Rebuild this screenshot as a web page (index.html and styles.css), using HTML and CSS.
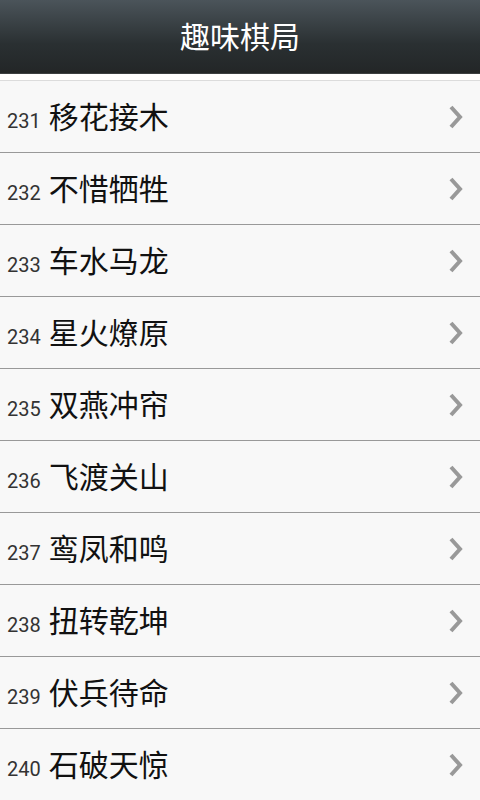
FILE: index.html
```html
<!DOCTYPE html>
<html lang="zh-CN">
  <head>
    <meta charset="UTF-8" />
    <meta name="viewport" content="width=device-width, initial-scale=1.0" />
    <title>趣味棋局</title>
    <link rel="stylesheet" href="styles.css">
  </head>
  <body>
    <div class="header">趣味棋局</div>
    <div class="gap"></div>
    <div class="list">
      <div class="item"><span class="num">231</span><span class="name">移花接木</span><svg class="arrow" viewBox="0 0 20 26"><path d="M5 3 L14 13 L5 23" /></svg></div>
      <div class="item"><span class="num">232</span><span class="name">不惜牺牲</span><svg class="arrow" viewBox="0 0 20 26"><path d="M5 3 L14 13 L5 23" /></svg></div>
      <div class="item"><span class="num">233</span><span class="name">车水马龙</span><svg class="arrow" viewBox="0 0 20 26"><path d="M5 3 L14 13 L5 23" /></svg></div>
      <div class="item"><span class="num">234</span><span class="name">星火燎原</span><svg class="arrow" viewBox="0 0 20 26"><path d="M5 3 L14 13 L5 23" /></svg></div>
      <div class="item"><span class="num">235</span><span class="name">双燕冲帘</span><svg class="arrow" viewBox="0 0 20 26"><path d="M5 3 L14 13 L5 23" /></svg></div>
      <div class="item"><span class="num">236</span><span class="name">飞渡关山</span><svg class="arrow" viewBox="0 0 20 26"><path d="M5 3 L14 13 L5 23" /></svg></div>
      <div class="item"><span class="num">237</span><span class="name">鸾凤和鸣</span><svg class="arrow" viewBox="0 0 20 26"><path d="M5 3 L14 13 L5 23" /></svg></div>
      <div class="item"><span class="num">238</span><span class="name">扭转乾坤</span><svg class="arrow" viewBox="0 0 20 26"><path d="M5 3 L14 13 L5 23" /></svg></div>
      <div class="item"><span class="num">239</span><span class="name">伏兵待命</span><svg class="arrow" viewBox="0 0 20 26"><path d="M5 3 L14 13 L5 23" /></svg></div>
      <div class="item"><span class="num">240</span><span class="name">石破天惊</span><svg class="arrow" viewBox="0 0 20 26"><path d="M5 3 L14 13 L5 23" /></svg></div>
    </div>
  </body>
</html>
```

FILE: styles.css
```css
body {
  margin: 0;
  background-color: #f8f8f8;
  font-family: Roboto, "Noto Sans CJK SC", sans-serif;
  overflow: hidden;
}
.header {
  height: 73px;
  background: linear-gradient(#4b545a, #2a3032 60%, #232627);
  border-bottom: 1px solid #3c3f40;
  color: #fff;
  font-size: 30px;
  text-align: center;
  line-height: 76px;
}
.gap {
  height: 6px;
  background-color: #fff;
  border-bottom: 1px solid #dcdcdc;
}
.item {
  display: flex;
  align-items: baseline;
  height: 71px;
  border-bottom: 1px solid #999;
  padding-left: 7px;
  position: relative;
}
.num {
  font-size: 20px;
  color: #333;
  line-height: 73px;
  margin-right: 8px;
}
.name {
  font-size: 30px;
  color: #111;
  line-height: 73px;
}
.arrow {
  position: absolute;
  right: 14px;
  top: 23px;
  width: 20px;
  height: 26px;
  fill: none;
  stroke: #999;
  stroke-width: 4;
}
```
